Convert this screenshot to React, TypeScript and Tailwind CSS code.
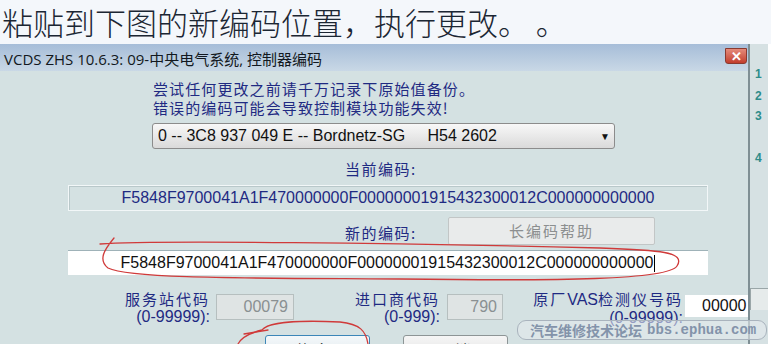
import React from "react";

const CJK = "font-['Noto_Sans_CJK_SC','Noto_Sans_CJK_SC',sans-serif]";

export default function App() {
  const code = "F5848F9700041A1F470000000F00000001915432300012C000000000000";
  return (
    <div className="relative w-[771px] h-[344px] overflow-hidden bg-[#f4f7fb]" style={{ fontFamily: "'Liberation Sans','Noto Sans CJK SC',sans-serif" }}>
      {/* heading */}
      <div className="h-[44px] pl-[2px] text-[31px] leading-[44px] text-[#1b2633] whitespace-nowrap [text-spacing-trim:space-all]" style={{ fontFamily: "'Noto Sans CJK SC',sans-serif", fontWeight: 300 }}>
        粘贴到下图的新编码位置，执行更改。 。
      </div>
      <div className="flex h-[300px]">
        {/* window */}
        <div className="w-[748px] flex flex-col">
          {/* title bar */}
          <div className="relative h-[27px] flex items-center pl-[4px] bg-gradient-to-b from-[#a6bdd8] to-[#c9d8e6]">
            <span className="text-[15px] text-[#121820] whitespace-nowrap pt-[4px]" style={{ fontFamily: "'Open Sans','Noto Sans CJK SC',sans-serif" }}>
              VCDS ZHS 10.6.3: 09-中央电气系统, 控制器编码
            </span>
            <div className="absolute right-[1px] top-[4px] w-[22px] h-[16px] rounded-b-[3px] border border-[#8a3a30] bg-gradient-to-b from-[#e48a7a] to-[#c23c2c] flex items-center justify-center text-white text-[13px] font-bold leading-none">
              ✕
            </div>
          </div>
          {/* body */}
          <div className="relative flex-1 bg-[#d4e1e2] overflow-hidden flex flex-col">
            <div className="pl-[153px] pt-[8px] text-[15px] leading-[19px] tracking-[1.1px] text-[#1f2a82]" style={{ fontFamily: "'Noto Sans CJK SC',sans-serif" }}>
              <div>尝试任何更改之前请千万记录下原始值备份。</div>
              <div>错误的编码可能会导致控制模块功能失效!</div>
            </div>
            <div className="ml-[152px] mt-[6px] w-[463px] h-[26px] rounded-[3px] border border-[#8c8c8c] bg-gradient-to-b from-[#f8f8f8] to-[#dadada] flex items-center pl-[5px] pr-[6px] text-[16px] text-[#111]">
              <span className="flex-1 whitespace-pre">0 -- 3C8 937 049 E -- Bordnetz-SG     H54 2602</span>
              <span className="text-[10px] mr-[-2px]">▼</span>
            </div>
            <div className="pl-[345px] mt-[10px] text-[15px] leading-[19px] tracking-[1.5px] text-[#1f2a82]" style={{ fontFamily: "'Noto Sans CJK SC',sans-serif" }}>
              当前编码:
            </div>
            <div className="ml-[68px] mt-[7px] w-[640px] h-[26px] border border-[#f2f7f8] shadow-[inset_1px_1px_0_#b9c8ca] flex items-center justify-center text-[16px] text-[#1f2a82]">
              {code}
            </div>
            <div className="flex mt-[6px] h-[28px]">
              <div className="pl-[345px] w-[448px] mt-[6px] text-[15px] leading-[19px] tracking-[1.5px] text-[#1f2a82]" style={{ fontFamily: "'Noto Sans CJK SC',sans-serif" }}>
                新的编码:
              </div>
              <div className="w-[207px] h-[28px] rounded-[2px] border border-[#c2c6c6] bg-[#e9ebeb] flex items-center justify-center text-[15px] tracking-[2px] text-[#8c8f90]" style={{ fontFamily: "'Noto Sans CJK SC',sans-serif" }}>
                长编码帮助
              </div>
            </div>
            <div className="ml-[68px] mt-[5px] w-[640px] h-[27px] bg-white border-t border-[#9fb2b8] flex items-center justify-center text-[16px] text-[#111]">
              <span>{code}</span>
              <span className="w-[1px] h-[17px] bg-black ml-[1px]"></span>
            </div>
            {/* bottom fields */}
            <div className="flex mt-[15px]">
              <div className="w-[210px] text-right text-[#1f2a82] leading-[18px]">
                <div className={`${CJK} text-[15px] tracking-[2px]`}>服务站代码</div>
                <div className="text-[16px]">(0-99999):</div>
              </div>
              <div className="ml-[6px] mt-[4px] w-[78px] h-[26px] border border-[#b6bfbf] bg-[#dfe4e4] text-right pr-[5px] text-[16px] leading-[24px] text-[#8a9092]">00079</div>
              <div className="w-[146px] text-right text-[#1f2a82] leading-[18px]">
                <div className={`${CJK} text-[15px] tracking-[2px]`}>进口商代码</div>
                <div className="text-[16px]">(0-999):</div>
              </div>
              <div className="ml-[7px] mt-[4px] w-[56px] h-[26px] border border-[#b6bfbf] bg-[#dfe4e4] text-right pr-[5px] text-[16px] leading-[24px] text-[#8a9092]">790</div>
              <div className="w-[180px] text-right text-[#1f2a82] leading-[18px]">
                <div className="text-[16px] whitespace-nowrap">
                  <span className={`${CJK} text-[15px] tracking-[2px]`}>原厂</span>VAS<span className={`${CJK} text-[15px] tracking-[2px]`}>检测仪号码</span>
                </div>
                <div className="text-[16px]">(0-99999):</div>
              </div>
              <div className="ml-[2px] mt-[5px] w-[63px] h-[22px] bg-white pl-[17px] text-[16px] leading-[22px] text-[#111] overflow-hidden whitespace-nowrap">00000</div>
            </div>
            <div className="flex mt-[8px]">
              <div className={`ml-[265px] w-[105px] h-[26px] rounded-[3px] border border-[#3c86b8] bg-gradient-to-b from-[#f4f8fa] to-[#dfe8ec] flex items-start justify-center pt-[3px] text-[15px] tracking-[6px] text-[#111] ${CJK}`}>执行</div>
              <div className={`ml-[33px] w-[105px] h-[26px] rounded-[3px] border border-[#8d9596] bg-gradient-to-b from-[#f6f6f6] to-[#e0e0e0] flex items-start justify-center pt-[3px] text-[15px] tracking-[6px] text-[#111] ${CJK}`}>取消</div>
            </div>
          </div>
        </div>
        {/* right strip */}
        <div className="relative w-[20px] border-l-2 border-[#7f8f94] bg-[#d6e1e3] text-[#2e8c8a] text-[12px] font-bold">
          <div className="absolute left-[5px] top-[21px]">1</div>
          <div className="absolute left-[5px] top-[43px]">2</div>
          <div className="absolute left-[5px] top-[63px]">3</div>
          <div className="absolute left-[5px] top-[105px]">4</div>
          <div className="absolute left-[0px] top-[244px] w-[18px] h-[22px] border-t border-l border-[#9aa6a8] bg-[#e6ebeb]"></div>
        </div>
        <div className="flex-1 bg-white"></div>
      </div>

      {/* watermark */}
      <div className="absolute left-[517px] top-[320px] w-[250px] h-[20px] rounded-[9px] border border-[#a9b3bd] bg-[#e2eaec]/60 flex items-center pl-[12px] text-[#8393aa] whitespace-nowrap overflow-hidden">
        <span className={`${CJK} text-[14px] font-bold`}>汽车维修技术论坛</span>
        <span className="ml-[5px] text-[14px] font-bold" style={{ fontFamily: "'Liberation Mono','DejaVu Sans Mono',monospace" }}>bbs.ephua.com</span>
      </div>

      {/* red hand-drawn marks */}
      <svg className="absolute left-0 top-0 pointer-events-none" width="771" height="344" viewBox="0 0 771 344">
        <g fill="none" stroke="#d03a3a" strokeWidth="1.3" strokeLinecap="round">
          <path d="M100 244 C150 240 400 243 600 248 C660 250 686 252 677 266 C668 280 560 281 400 279 C250 278 130 279 108 268 C98 260 104 250 114 238" />
          <path d="M238 344 C241 338 250 333 262 330 C268 322 300 320 340 322 C360 324 366 331 368 344" />
          <path d="M244 334 L268 330" />
        </g>
      </svg>
    </div>
  );
}
